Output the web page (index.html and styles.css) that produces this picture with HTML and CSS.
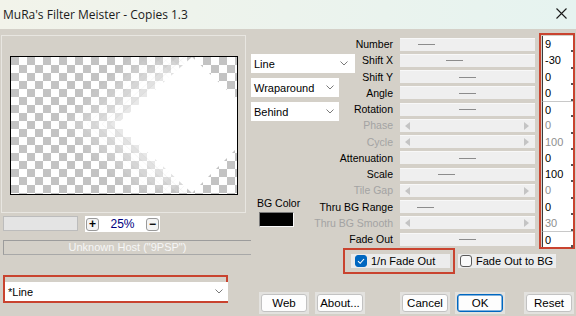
FILE: index.html
```html
<!DOCTYPE html>
<html lang="en">
<head>
    <meta charset="UTF-8">
    <title>MuRa's Filter Meister - Copies 1.3</title>
    <link rel="stylesheet" href="styles.css">
</head>
<body>
<div class="window">
    <div class="titlebar">
        <span class="title">MuRa's Filter Meister - Copies 1.3</span>
        <svg class="close" width="11" height="11" viewBox="0 0 11 11">
            <path d="M0.5 0.5 L10.5 10.5 M10.5 0.5 L0.5 10.5" stroke="#1a1a1a" stroke-width="1.1" fill="none"/>
        </svg>
    </div>

    <div class="content">
        <!-- left: preview, zoom, host, preset -->
        <div class="left">
            <div class="preview-panel">
                <div class="preview">
                    <svg width="226" height="137" viewBox="0 0 226 137">
                        <g fill="#fff" stroke="#bdbdbd" stroke-width="0.6">
                            <polygon points="181,0 106,67 181,136 251,66" transform="translate(-60,0)" opacity="0.05"/>
                            <polygon points="181,0 106,67 181,136 251,66" transform="translate(-52.5,0)" opacity="0.06"/>
                            <polygon points="181,0 106,67 181,136 251,66" transform="translate(-45,0)" opacity="0.07"/>
                            <polygon points="181,0 106,67 181,136 251,66" transform="translate(-37.5,0)" opacity="0.09"/>
                            <polygon points="181,0 106,67 181,136 251,66" transform="translate(-30,0)" opacity="0.11"/>
                            <polygon points="181,0 106,67 181,136 251,66" transform="translate(-22.5,0)" opacity="0.14"/>
                            <polygon points="181,0 106,67 181,136 251,66" transform="translate(-15,0)" opacity="0.18"/>
                            <polygon points="181,0 106,67 181,136 251,66" transform="translate(-7.5,0)" opacity="0.24"/>
                        </g>
                        <polygon points="181,0 106,67 181,136 251,66" fill="#fff"/>
                    </svg>
                </div>
            </div>

            <div class="zoom-row">
                <div class="progress"></div>
                <div class="zoom">
                    <span class="zbtn">+</span>
                    <span class="zval">25%</span>
                    <span class="zbtn">&minus;</span>
                </div>
            </div>

            <div class="host">Unknown Host ("9PSP")</div>

            <div class="mark preset">
                <div class="select">*Line
                    <svg class="chev" width="8" height="5" viewBox="0 0 8 5"><polyline points="0.5,0.5 4,4 7.5,0.5" fill="none" stroke="#7a7a7a"/></svg>
                </div>
            </div>
        </div>

        <!-- right: parameters, options, buttons -->
        <div class="right">
            <div class="params-area">
                <div class="side">
                    <div class="select wide">Line
                        <svg class="chev" width="8" height="5" viewBox="0 0 8 5"><polyline points="0.5,0.5 4,4 7.5,0.5" fill="none" stroke="#7a7a7a"/></svg>
                    </div>
                    <div class="select">Wraparound
                        <svg class="chev" width="8" height="5" viewBox="0 0 8 5"><polyline points="0.5,0.5 4,4 7.5,0.5" fill="none" stroke="#7a7a7a"/></svg>
                    </div>
                    <div class="select">Behind
                        <svg class="chev" width="8" height="5" viewBox="0 0 8 5"><polyline points="0.5,0.5 4,4 7.5,0.5" fill="none" stroke="#7a7a7a"/></svg>
                    </div>
                    <div class="bgcolor">
                        <div class="bg-label">BG Color</div>
                        <div class="swatch"></div>
                    </div>
                </div>

                <div class="params">
                    <span class="label">Number</span>
                    <div class="slider"><span class="thumb" style="margin-left:18px"></span></div>
                    <span class="label">Shift X</span>
                    <div class="slider"><span class="thumb" style="margin-left:46px"></span></div>
                    <span class="label">Shift Y</span>
                    <div class="slider"><span class="thumb" style="margin-left:59px"></span></div>
                    <span class="label">Angle</span>
                    <div class="slider"><span class="thumb" style="margin-left:59px"></span></div>
                    <span class="label">Rotation</span>
                    <div class="slider"><span class="thumb" style="margin-left:59px"></span></div>
                    <span class="label off">Phase</span>
                    <div class="slider off"><span class="arr-l"></span><span class="arr-r"></span></div>
                    <span class="label off">Cycle</span>
                    <div class="slider off"><span class="arr-l"></span><span class="arr-r"></span></div>
                    <span class="label">Attenuation</span>
                    <div class="slider"><span class="thumb" style="margin-left:59px"></span></div>
                    <span class="label">Scale</span>
                    <div class="slider"><span class="thumb" style="margin-left:38px"></span></div>
                    <span class="label off">Tile Gap</span>
                    <div class="slider off"><span class="arr-l"></span><span class="arr-r"></span></div>
                    <span class="label">Thru BG Range</span>
                    <div class="slider"><span class="thumb" style="margin-left:17px"></span></div>
                    <span class="label off">Thru BG Smooth</span>
                    <div class="slider off"><span class="arr-l"></span><span class="arr-r"></span></div>
                    <span class="label">Fade Out</span>
                    <div class="slider"><span class="thumb" style="margin-left:59px"></span></div>
                </div>

                <div class="mark values">
                    <div class="cell">9</div>
                    <div class="cell">-30</div>
                    <div class="cell">0</div>
                    <div class="cell">0</div>
                    <div class="cell sep">0</div>
                    <div class="cell off">0</div>
                    <div class="cell off">100</div>
                    <div class="cell">0</div>
                    <div class="cell">100</div>
                    <div class="cell off">0</div>
                    <div class="cell">0</div>
                    <div class="cell off">30</div>
                    <div class="cell sep">0</div>
                </div>
            </div>

            <div class="checks">
                <div class="mark check-box">
                    <div class="check">
                        <span class="box on">
                            <svg width="12" height="12" viewBox="0 0 12 12"><polyline points="3,6.2 5.2,8.3 9,4" fill="none" stroke="#fff" stroke-width="1.1"/></svg>
                        </span>
                        1/n Fade Out
                    </div>
                </div>
                <div class="check plain">
                    <span class="box"></span>
                    Fade Out to BG
                </div>
            </div>

            <div class="buttons">
                <button class="btn"><span>Web</span></button>
                <button class="btn"><span>About...</span></button>
                <button class="btn gap"><span>Cancel</span></button>
                <button class="btn default"><span>OK</span></button>
                <button class="btn reset"><span>Reset</span></button>
            </div>
        </div>
    </div>
</div>
</body>
</html>
```

FILE: styles.css
```css
body {
    margin: 0;
    font-family: "Liberation Sans", Arial, sans-serif;
    font-size: 11px;
    color: #000;
}

.window {
    width: 576px;
    height: 316px;
    background: #d4d0c8;
    overflow: hidden;
}

.titlebar {
    height: 29px;
    display: flex;
    align-items: center;
    justify-content: space-between;
    padding: 0 9px 0 3px;
    background: linear-gradient(90deg, #f2f3ea, #e6f3f0);
}

.title {
    font-family: "Open Sans", "Noto Sans", sans-serif;
    font-size: 12px;
    color: #1b1b1b;
    margin-top: -1px;
}

.close {
    margin-top: -2px;
}

.content {
    display: flex;
}

/* left column */
.left {
    width: 251px;
    flex: none;
}

.preview-panel {
    margin: 6px 0 0 1px;
    width: 243px;
    height: 176px;
    border: 1px solid #e8e6e1;
}

.preview {
    margin: 20px 0 0 8px;
    width: 226px;
    height: 137px;
    border: 1px solid #000;
    background-color: #fff;
    background-image: conic-gradient(#fff 0 25%, #c3c3c3 0 50%, #fff 0 75%, #c3c3c3 0);
    background-size: 16px 16px;
}

.preview svg {
    display: block;
}

.zoom-row {
    display: flex;
    align-items: flex-start;
    margin: 3px 0 0 3px;
    gap: 7px;
}

.progress {
    width: 73px;
    height: 13px;
    background: #e4e4e4;
    border: 1px solid #bcbcbc;
}

.zoom {
    width: 73px;
    height: 16px;
    background: #fff;
    display: flex;
    align-items: center;
    justify-content: space-between;
    padding: 0 1px;
}

.zbtn {
    width: 11px;
    height: 11px;
    border: 1px solid #9a9a9a;
    border-radius: 3px;
    background: #f4f4f4;
    font-size: 12px;
    font-weight: bold;
    line-height: 10px;
    text-align: center;
    color: #000;
}

.zval {
    color: #000080;
    font-size: 12px;
}

.host {
    margin: 8px 0 0 3px;
    width: 247px;
    height: 13px;
    border-top: 1px solid #9c9c9c;
    border-left: 1px solid #9c9c9c;
    border-bottom: 1px solid #a8a8a8;
    color: #f6f6f6;
    text-align: center;
    line-height: 13px;
}

.mark {
    border: 2px solid #c9432f;
}

.preset {
    margin: 20px 0 0 3px;
    width: 225px;
    height: 28px;
    box-sizing: border-box;
    padding: 5px 2px 0 0;
}

.preset .select {
    width: 223px;
    height: 19px;
}

.select {
    box-sizing: border-box;
    width: 88px;
    height: 19px;
    background: #fff;
    display: flex;
    align-items: center;
    justify-content: space-between;
    padding: 0 5px 0 3px;
    font-size: 11px;
    white-space: nowrap;
}

.select.wide {
    width: 104px;
    padding-right: 7px;
    margin-bottom: 1px;
}

.chev {
    flex: none;
}

/* right column */
.right {
    flex: 1;
    padding-top: 7px;
}

.params-area {
    display: flex;
    align-items: flex-start;
}

.side {
    width: 60px;
    flex: none;
    padding-top: 18px;
}

.side .select + .select {
    margin-top: 5px;
}

.bgcolor {
    margin: 76px 0 0 6px;
}

.bg-label {
    font-size: 10.5px;
    line-height: 12px;
}

.swatch {
    width: 33px;
    height: 13px;
    margin: 3px 0 0 2px;
    background: #000;
    border: 1px solid;
    border-color: #7a7a7a #fafafa #fafafa #7a7a7a;
}

.params {
    display: grid;
    grid-template-columns: 82px 135px;
    grid-auto-rows: 16.25px;
    column-gap: 7px;
    align-items: center;
}

.label {
    text-align: right;
    font-size: 10.5px;
    white-space: nowrap;
}

.label.off {
    color: #a3a3a3;
}

.slider {
    height: 12px;
    background: #efefef;
    border-top: 1px solid #f8f8f8;
    display: flex;
    align-items: center;
}

.thumb {
    width: 17px;
    height: 1px;
    background: #8c8c8c;
}

.slider.off {
    justify-content: space-between;
    padding: 0 6px 0 5px;
}

.arr-l,
.arr-r {
    width: 0;
    height: 0;
    border-top: 4px solid transparent;
    border-bottom: 4px solid transparent;
}

.arr-l {
    border-right: 5px solid #c4c4c4;
}

.arr-r {
    border-left: 5px solid #c4c4c4;
}

.values {
    margin: -3px 0 0 4px;
    width: 31px;
    padding: 1px 0 0 1px;
}

.cell {
    position: relative;
    height: 16.25px;
    box-sizing: border-box;
    background: #fff;
    border-left: 1px solid #3c3c3c;
    padding-left: 2px;
    line-height: 16px;
    font-size: 11px;
}

.cell::after {
    content: "";
    position: absolute;
    right: 0;
    bottom: -1px;
    width: 2px;
    height: 3px;
    background: #555;
}

.cell.sep {
    border-top: 1px solid #c8c8c8;
}

.cell.off {
    color: #8e8e8e;
}

.checks {
    display: flex;
    align-items: center;
    margin-top: -1px;
    padding-left: 92px;
}

.check-box {
    padding: 4px 3px 4px 6px;
}

.check {
    width: 99px;
    height: 14px;
    box-sizing: border-box;
    background: #ececec;
    display: flex;
    align-items: center;
    gap: 4px;
    padding-left: 4px;
    font-size: 11px;
    white-space: nowrap;
}

.check.plain {
    width: 98px;
    margin-left: 3px;
    padding-left: 2px;
}

.box {
    width: 12px;
    height: 12px;
    box-sizing: border-box;
    border: 1px solid #5a5a5a;
    border-radius: 3px;
    background: #fafafa;
    flex: none;
}

.box.on {
    background: #0067c0;
    border-color: #0067c0;
    display: flex;
    align-items: center;
    justify-content: center;
}

.box.on svg {
    flex: none;
    margin: -1px;
}

.buttons {
    display: flex;
    margin-top: 18px;
    padding-left: 8px;
    gap: 6px;
}

.btn {
    width: 50px;
    height: 22px;
    padding: 2px;
    border: none;
    background: #e3e2df;
    font-family: "Liberation Sans", Arial, sans-serif;
    font-size: 11.5px;
    color: #000;
}

.btn span {
    display: flex;
    align-items: center;
    justify-content: center;
    height: 100%;
    box-sizing: border-box;
    background: #fdfdfd;
    border: 1px solid #c2c2c2;
    border-radius: 3px;
}

.btn.gap {
    margin-left: 29px;
}

.btn.default {
    margin-left: -1px;
}

.btn.default span {
    border-color: #0067c0;
    box-shadow: inset 0 0 0 0.5px #0067c0;
}

.btn.reset {
    margin-left: 13px;
}
```
